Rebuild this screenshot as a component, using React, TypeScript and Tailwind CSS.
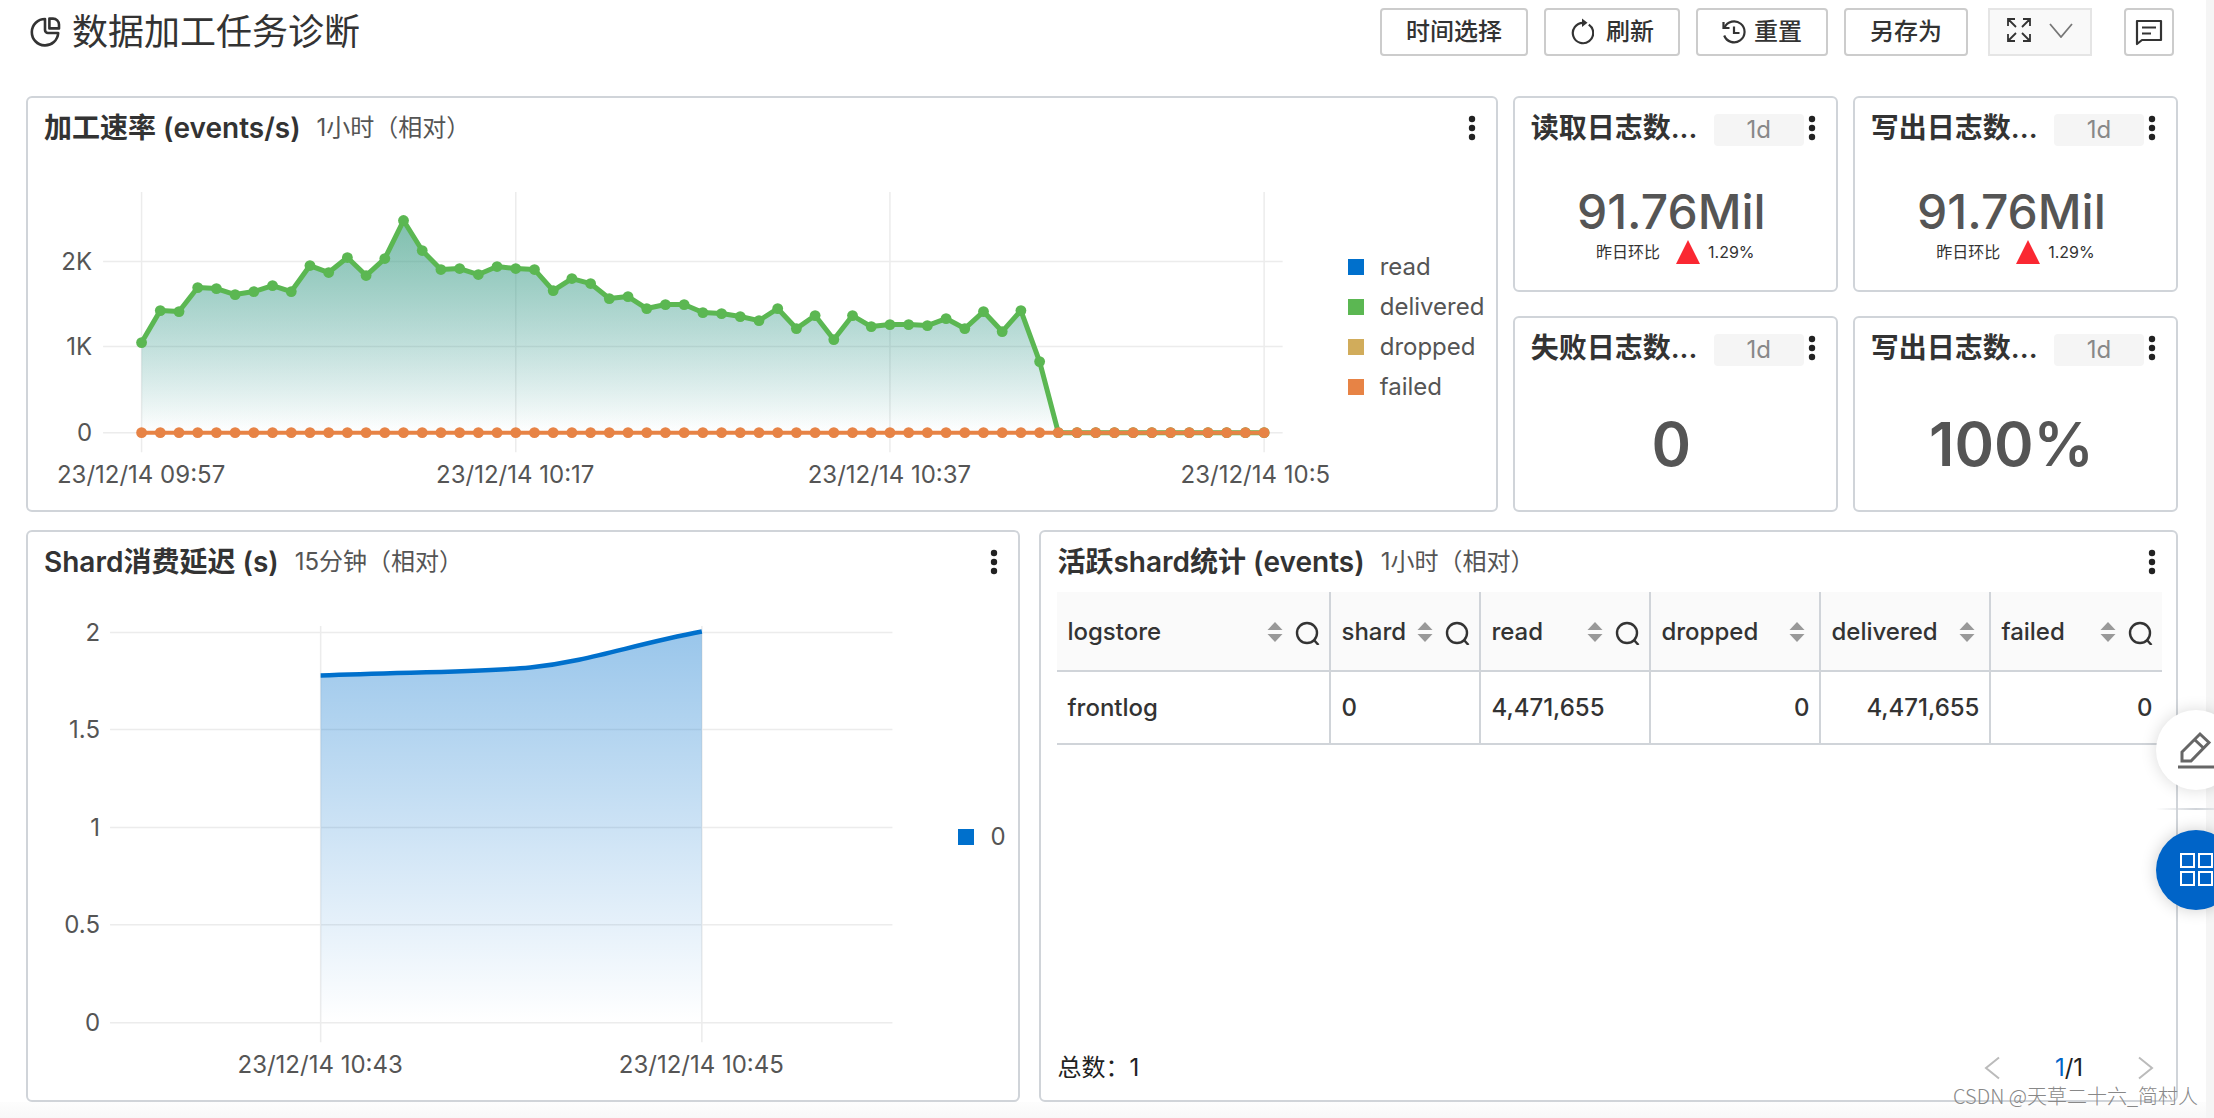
import type { ReactNode } from 'react'

const rate = [
  342, 310, 311, 287, 288, 294, 291, 285, 291, 265, 272, 257, 275, 258, 220, 250, 269, 268, 274, 266,
  268, 269, 290, 278, 283, 298, 296, 308, 304, 304, 312, 313, 316, 320, 308, 328, 315, 339, 315, 326,
  324, 324, 325, 318, 328, 311, 331, 310, 361, 432, 432, 432, 432, 432, 432, 432, 432, 432, 432, 432, 432,
]

// Chart space: x starts at the card's inner left edge, y at the top of the plot
const ratePoints = rate.map((y, i) => ({ x: 113.5 + i * 18.7, y: y - 172 + 0.5 }))
const rateLine = ratePoints.map((p) => `${p.x},${p.y}`).join(' ')
const rateBase = 260.5

interface CardProps {
  title: string
  range?: string
  badge?: string
  className?: string
  children: ReactNode
}

function MoreButton() {
  return (
    <button aria-label="更多" className="ml-auto shrink-0 text-[#222]">
      <svg width="8" height="26" viewBox="0 0 8 26" fill="currentColor">
        <circle cx="4" cy="4" r="3.2" />
        <circle cx="4" cy="13" r="3.2" />
        <circle cx="4" cy="22" r="3.2" />
      </svg>
    </button>
  )
}

function Card({ title, range, badge, className = '', children }: CardProps) {
  return (
    <section className={`flex min-w-0 flex-col rounded-md border-2 border-[#d0d4d9] bg-white ${className}`}>
      <header className="flex h-[60px] shrink-0 items-center pr-5 pl-4">
        <h2 className="text-[28px] leading-9 font-semibold whitespace-nowrap text-[#333]">{title}</h2>
        {range && <span className="ml-4 text-2xl whitespace-nowrap text-[#555]">{range}</span>}
        {badge && (
          <span className="mt-1 ml-auto h-8 w-[90px] shrink-0 rounded bg-[#f5f5f5] text-center text-2xl leading-8 text-[#888]">
            {badge}
          </span>
        )}
        {badge ? <span className="ml-1 flex"><MoreButton /></span> : <MoreButton />}
      </header>
      {children}
    </section>
  )
}

function StatCard({ title, value, change }: { title: string; value: string; change?: string }) {
  return (
    <Card title={title} badge="1d" className="h-[196px]">
      {change ? (
        <div className="flex flex-col items-center pt-[26px]">
          <p className="pr-2 text-5xl leading-[56px] font-medium text-[#555]">{value}</p>
          <p className="flex items-center text-base leading-6 text-[#333]">
            <span>昨日环比</span>
            <svg width="24" height="24" viewBox="0 0 24 24" className="mr-2 ml-4">
              <path d="M12 0 24 24H0z" fill="#fa2832" />
            </svg>
            <span>{change}</span>
          </p>
        </div>
      ) : (
        <p className="pt-[30px] pr-2 text-center text-6xl leading-[72px] font-semibold text-[#555]">{value}</p>
      )}
    </Card>
  )
}

function LegendItem({ color, label }: { color: string; label: string }) {
  return (
    <li className="flex h-10 items-center gap-4 text-2xl text-[#555]">
      <span className={`size-4 ${color}`} />
      {label}
    </li>
  )
}

function RateChart() {
  return (
    <svg viewBox="0 0 1304 320" className="min-w-0 flex-1 overflow-hidden" fill="#555" fontSize="24">
      <defs>
        <linearGradient id="rate-read" x1="0" y1="0" x2="0" y2="1">
          <stop offset="0" stopColor="#0070cc" stopOpacity="0.4" />
          <stop offset="1" stopColor="#0070cc" stopOpacity="0" />
        </linearGradient>
        <linearGradient id="rate-delivered" x1="0" y1="0" x2="0" y2="1">
          <stop offset="0" stopColor="#5bb752" stopOpacity="0.4" />
          <stop offset="1" stopColor="#5bb752" stopOpacity="0" />
        </linearGradient>
      </defs>
      <path
        d="M75 89.5H1254M75 174.5H1254M75 260.5H1254M113.5 20V280M487.5 20V280M861.5 20V280M1235.5 20V280"
        stroke="#ececec"
        strokeWidth="1.5"
      />
      <g textAnchor="end">
        <text x="64" y="98">2K</text>
        <text x="64" y="183">1K</text>
        <text x="64" y="269">0</text>
      </g>
      <g textAnchor="middle">
        <text x="113" y="311">23/12/14 09:57</text>
        <text x="487" y="311">23/12/14 10:17</text>
        <text x="861" y="311">23/12/14 10:37</text>
      </g>
      <text x="1152" y="311">23/12/14 10:5</text>
      <polygon points={`113.5,${rateBase} ${rateLine} 1235.5,${rateBase}`} fill="url(#rate-read)" />
      <polygon points={`113.5,${rateBase} ${rateLine} 1235.5,${rateBase}`} fill="url(#rate-delivered)" />
      <polyline points={rateLine} fill="none" stroke="#5bb752" strokeWidth="5" strokeLinejoin="round" />
      {ratePoints.map((p) => (
        <circle key={p.x} cx={p.x} cy={p.y} r="5.4" fill="#5bb752" />
      ))}
      <path d={`M113.5 ${rateBase}H1235.5`} stroke="#e78345" strokeWidth="4" />
      {ratePoints.map((p) => (
        <circle key={p.x} cx={p.x} cy={rateBase} r="5.4" fill="#e78345" />
      ))}
    </svg>
  )
}

function DelayChart() {
  return (
    <svg viewBox="0 0 866 490" className="min-w-0 flex-1" fill="#555" fontSize="24">
      <defs>
        <linearGradient id="delay" x1="0" y1="0" x2="0" y2="1">
          <stop offset="0" stopColor="#0070cc" stopOpacity="0.4" />
          <stop offset="1" stopColor="#0070cc" stopOpacity="0" />
        </linearGradient>
      </defs>
      <path
        d="M82 40.5H864M82 137.5H864M82 235.5H864M82 332.5H864M82 430.5H864M292.5 34V450M673.5 34V450"
        stroke="#ececec"
        strokeWidth="1.5"
      />
      <g textAnchor="end">
        <text x="72" y="49">2</text>
        <text x="72" y="146">1.5</text>
        <text x="72" y="244">1</text>
        <text x="72" y="341">0.5</text>
        <text x="72" y="439">0</text>
      </g>
      <g textAnchor="middle">
        <text x="292" y="481">23/12/14 10:43</text>
        <text x="673" y="481">23/12/14 10:45</text>
      </g>
      <path d="M292.5 83.5C388 80 452 80 502 75.5C562 69 602 53 673.5 39.5V430.5H292.5Z" fill="url(#delay)" />
      <path d="M292.5 83.5C388 80 452 80 502 75.5C562 69 602 53 673.5 39.5" fill="none" stroke="#0070cc" strokeWidth="4.5" />
    </svg>
  )
}

const columns = [
  { name: 'logstore', width: 'w-[273px]', value: 'frontlog', search: true },
  { name: 'shard', width: 'w-[150px]', value: '0', search: true },
  { name: 'read', width: 'w-[170px]', value: '4,471,655', search: true },
  { name: 'dropped', width: 'w-[170px]', value: '0', right: true },
  { name: 'delivered', width: 'w-[170px]', value: '4,471,655', right: true },
  { name: 'failed', width: 'w-[172px]', value: '0', right: true, search: true },
]

function ShardTable() {
  return (
    <table className="w-full table-fixed border-collapse text-2xl text-[#333]">
      <thead>
        <tr className="h-[79px] border-b-2 border-[#d0d4d9] bg-[#fafafa]">
          {columns.map((c) => (
            <th
              key={c.name}
              className={`${c.width} border-r-2 border-[#d0d4d9] pt-0.5 pr-2 pl-2.5 text-left font-medium last:border-r-0`}
            >
              <div className="flex items-center">
                {c.name}
                <button aria-label={`${c.name} 排序`} className={`ml-auto ${c.search ? '' : 'mr-1.5'}`}>
                  <svg width="16" height="20" viewBox="0 0 16 20" fill="#999">
                    <path d="M8 0l7.5 8H.5zM8 20l7.5-8H.5z" />
                  </svg>
                </button>
                {c.search && (
                  <button aria-label={`${c.name} 搜索`} className="ml-3">
                    <svg width="26" height="26" viewBox="0 0 26 26" fill="none" stroke="#333" strokeWidth="2.4">
                      <circle cx="12" cy="14" r="10" />
                      <path d="M18.5 20.5l5 5.5" />
                    </svg>
                  </button>
                )}
              </div>
            </th>
          ))}
        </tr>
      </thead>
      <tbody>
        <tr className="h-[73px] border-b-2 border-[#d0d4d9]">
          {columns.map((c) => (
            <td
              key={c.name}
              className={`border-r-2 border-[#d0d4d9] px-2.5 font-medium last:border-r-0 ${c.right ? 'text-right' : ''}`}
            >
              {c.value}
            </td>
          ))}
        </tr>
      </tbody>
    </table>
  )
}

const toolButton =
  'flex h-12 items-center rounded border-2 border-[#ccc] bg-white px-6 text-2xl font-medium whitespace-nowrap text-[#333]'

function Toolbar() {
  return (
    <div className="flex items-center gap-4">
      <button className={toolButton}>时间选择</button>
      <button className={`${toolButton} gap-3`}>
        <svg width="24" height="28" viewBox="0 0 24 28" fill="none" stroke="#333" strokeWidth="2.2">
          <path d="M18.8 6.6A10.2 10.2 0 1 1 13 4.8" />
          <path d="M12 0.5L17.5 4.8 12 9Z" fill="#333" stroke="none" />
        </svg>
        刷新
      </button>
      <button className={`${toolButton} gap-2`}>
        <svg width="24" height="24" viewBox="0 0 24 24" fill="none" stroke="#333" strokeWidth="2.2">
          <path d="M2.5 7.5A10.5 10.5 0 1 1 2.2 15.5" />
          <path d="M1.5 2V8H7.5M12 6.5V13H17.5" />
        </svg>
        重置
      </button>
      <button className={toolButton}>另存为</button>
      <button
        aria-label="全屏"
        className="ml-1 flex h-12 w-[104px] items-center justify-center gap-[18px] border-2 border-[#e5e5e5] bg-[#f9f9f9] pb-1"
      >
        <svg width="24" height="24" viewBox="0 0 24 24" fill="none" stroke="#333" strokeWidth="1.8">
          <path d="M1 8V1H8M1 1L9 9M16 1H23V8M23 1L15 9M1 16V23H8M1 23L9 15M16 23H23V16M23 23L15 15" />
        </svg>
        <svg width="24" height="16" viewBox="0 0 24 16" fill="none" stroke="#777" strokeWidth="1.8">
          <path d="M1 2L12 15 23 2" />
        </svg>
      </button>
      <button
        aria-label="反馈"
        className="ml-4 flex h-12 w-[50px] items-center justify-center rounded border-2 border-[#ccc] bg-white"
      >
        <svg width="28" height="28" viewBox="0 0 28 28" fill="none" stroke="#333" strokeWidth="2.2">
          <path d="M2 26V3H26V22H7Z" strokeLinejoin="round" />
          <path d="M7 9.5H21M7 15.5H16" />
        </svg>
      </button>
    </div>
  )
}

function SideActions() {
  return (
    <aside className="fixed top-[710px] -right-[22px] flex w-20 flex-col items-center">
      <button
        aria-label="编辑"
        className="flex size-20 items-center justify-center rounded-full bg-white shadow-[0_0_16px_rgba(0,0,0,0.15)]"
      >
        <svg width="36" height="38" viewBox="0 0 36 38" fill="none" stroke="#666" strokeWidth="3">
          <path d="M4 30V21L22 3 31 11.5 13 30ZM16.5 8.5L26 17.5" />
          <path d="M0 36H36" />
        </svg>
      </button>
      <div className="mt-[18px] mb-5 h-0.5 w-full bg-linear-to-r from-transparent via-[#d0d4d9] to-transparent" />
      <button
        aria-label="应用"
        className="flex size-20 items-center justify-center rounded-full bg-[#0064c8] shadow-[0_0_16px_rgba(0,0,0,0.2)]"
      >
        <svg width="34" height="34" viewBox="0 0 34 34" fill="none" stroke="#fff" strokeWidth="2">
          <path d="M2 1H15V14H2ZM20 1H33V14H20ZM2 19H15V32H2ZM20 19H33V32H20Z" />
        </svg>
      </button>
    </aside>
  )
}

export default function App() {
  return (
    <div className="relative flex min-h-screen flex-col overflow-hidden border-r-8 border-[#f5f5f5] bg-white font-[Inter,'Noto_Sans_CJK_SC',sans-serif] leading-normal text-[#333]">
      <header className="flex items-center justify-between pt-2 pr-8 pl-[30px]">
        <div className="flex items-center gap-2.5">
          <svg width="32" height="32" viewBox="0 0 32 32" fill="none" stroke="#333" strokeWidth="2.6">
            <path d="M15 3A13.2 13.2 0 1 0 28.2 17H18A3 3 0 0 1 15 14Z" strokeLinejoin="round" />
            <path d="M19.4 2.6V12.4H29V8.6A6 6 0 0 0 23 2.6Z" strokeLinejoin="round" />
          </svg>
          <h1 className="text-4xl leading-[48px]">数据加工任务诊断</h1>
        </div>
        <Toolbar />
      </header>

      <main className="flex flex-col gap-[18px] pt-10 pr-7 pl-[26px]">
        <div className="grid grid-cols-[minmax(0,1471fr)_minmax(0,325fr)_minmax(0,325fr)] gap-x-[15px] gap-y-6">
          <Card title="加工速率 (events/s)" range="1小时（相对）" className="row-span-2">
            <div className="flex items-center pt-3.5">
              <RateChart />
              <ul className="w-[163px] pb-2.5 pl-[15px]">
                <LegendItem color="bg-[#0070cc]" label="read" />
                <LegendItem color="bg-[#5bb752]" label="delivered" />
                <LegendItem color="bg-[#d1ac5b]" label="dropped" />
                <LegendItem color="bg-[#e78345]" label="failed" />
              </ul>
            </div>
          </Card>
          <StatCard title="读取日志数..." value="91.76Mil" change="1.29%" />
          <StatCard title="写出日志数..." value="91.76Mil" change="1.29%" />
          <StatCard title="失败日志数..." value="0" />
          <StatCard title="写出日志数..." value="100%" />
        </div>

        <div className="grid grid-cols-[minmax(0,994fr)_minmax(0,1138fr)] gap-x-[19px]">
          <Card title="Shard消费延迟 (s)" range="15分钟（相对）">
            <div className="flex items-center pb-[18px]">
              <DelayChart />
              <ul className="w-[124px] pl-16">
                <LegendItem color="bg-[#0070cc]" label="0" />
              </ul>
            </div>
          </Card>
          <Card title="活跃shard统计 (events)" range="1小时（相对）">
            <div className="flex flex-1 flex-col px-4">
              <ShardTable />
              <footer className="mt-auto flex items-center justify-between pb-4 text-2xl text-[#222]">
                <span>总数：1</span>
                <nav className="flex items-center pr-1.5">
                  <button aria-label="上一页">
                    <svg width="16" height="24" viewBox="0 0 16 24" fill="none" stroke="#bbb" strokeWidth="2">
                      <path d="M15 1.5L2 12 15 22.5" />
                    </svg>
                  </button>
                  <span className="w-[138px] text-center">
                    <span className="text-[#0064c8]">1</span>/1
                  </span>
                  <button aria-label="下一页">
                    <svg width="16" height="24" viewBox="0 0 16 24" fill="none" stroke="#bbb" strokeWidth="2">
                      <path d="M1 1.5L14 12 1 22.5" />
                    </svg>
                  </button>
                </nav>
              </footer>
            </div>
          </Card>
        </div>
      </main>
      <div className="min-h-4 flex-1 bg-linear-to-b from-[#fdfdfd] to-[#f8f8f8]" />

      <SideActions />
      <p className="absolute right-2 bottom-2 font-['Noto_Sans_CJK_SC',sans-serif] text-xl leading-7 font-light text-[#888]">
        CSDN @天草二十六_简村人
      </p>
    </div>
  )
}
